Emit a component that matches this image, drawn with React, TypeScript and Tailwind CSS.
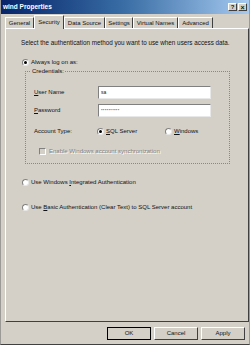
import React from 'react';

const tabs = [
  { label: 'General', w: 'w-[29px]' },
  { label: 'Security', w: 'w-[30px]', active: true },
  { label: 'Data Source', w: 'w-[41px]' },
  { label: 'Settings', w: 'w-[28px]' },
  { label: 'Virtual Names', w: 'w-[45px]' },
  { label: 'Advanced', w: 'w-[35px]' },
];

function Radio({ checked }: { checked?: boolean }) {
  return (
    <span className="flex h-[7px] w-[7px] shrink-0 items-center justify-center rounded-full border border-[#808080] border-b-[#e8e8e8] border-r-[#e8e8e8] bg-white">
      {checked && <span className="h-[3px] w-[3px] rounded-full bg-black" />}
    </span>
  );
}

function Button({ label, primary }: { label: string; primary?: boolean }) {
  return (
    <div
      className={
        'flex h-[13px] w-[44px] items-center justify-center border text-[6px] ' +
        (primary
          ? 'border-black'
          : 'border-white border-b-[#404040] border-r-[#404040]')
      }
    >
      {label}
    </div>
  );
}

export default function App() {
  return (
    <div className="flex h-[345px] w-[250px] flex-col border-x border-b border-x-[#9c9a96] border-b-[#404040] bg-[#d4d0c8] font-['Liberation_Sans',Arial,sans-serif] text-[#111]">
      {/* Title bar */}
      <div className="flex h-[14px] shrink-0 items-center justify-between bg-gradient-to-r from-[#0a246a] via-[#3a6ea5] to-[#a6caf0] pl-[2px] pr-[2px]">
        <span className="text-[6.5px] font-bold leading-none text-white">wind Properties</span>
        <div className="flex gap-[1px]">
          <span className="flex h-[8px] w-[9px] items-center justify-center border border-white border-b-[#404040] border-r-[#404040] bg-[#d4d0c8] text-[6px] font-bold leading-none">?</span>
          <span className="flex h-[8px] w-[9px] items-center justify-center border border-white border-b-[#404040] border-r-[#404040] bg-[#d4d0c8] text-[7px] font-bold leading-none">×</span>
        </div>
      </div>

      {/* Tabs */}
      <div className="mt-[1px] flex h-[13px] shrink-0 items-end pl-[4px]">
        {tabs.map((t) =>
          t.active ? (
            <div
              key={t.label}
              className={`relative z-10 -mb-px flex h-[14px] items-center justify-center border-l border-r border-t border-l-white border-r-[#404040] border-t-white bg-[#d4d0c8] text-[6px] ${t.w}`}
            >
              {t.label}
            </div>
          ) : (
            <div
              key={t.label}
              className={`flex h-[11px] items-center justify-center border-l border-r border-t border-l-white border-r-[#404040] border-t-white text-[6px] ${t.w}`}
            >
              {t.label}
            </div>
          )
        )}
      </div>

      {/* Panel */}
      <div className="ml-[4px] flex h-[294px] w-[244px] shrink-0 flex-col border border-white border-b-[#404040] border-r-[#404040] pl-[15px]">
        <p className="mt-[10px] text-[6.3px] leading-[8px]">
          Select the authentication method you want to use when users access data.
        </p>

        <div className="mt-[11px] flex h-[8px] items-center gap-[2px] pl-[1px] text-[6px]">
          <Radio checked />
          <span>Always log on as:</span>
        </div>

        <fieldset className="mt-[1px] ml-[4px] h-[97px] w-[205px] border border-dotted border-[#8a8884] pl-[8px]">
          <legend className="-ml-[3px] px-[1px] text-[6px] leading-[8px]">Credentials:</legend>

          <div className="mt-[11px] flex h-[13px] items-center text-[6px]">
            <span className="w-[64px]"><span className="underline">U</span>ser Name</span>
            <div className="flex h-[13px] w-[113px] items-center border border-[#808080] border-b-[#e8e8e8] border-r-[#e8e8e8] bg-white pl-[2px] text-[5px]">
              sa
            </div>
          </div>

          <div className="mt-[5px] flex h-[13px] items-center text-[6px]">
            <span className="w-[64px]"><span className="underline">P</span>assword</span>
            <div className="flex h-[13px] w-[113px] items-center border border-[#808080] border-b-[#e8e8e8] border-r-[#e8e8e8] bg-white pl-[2px] text-[4px] tracking-[0.3px]">
              **********
            </div>
          </div>

          <div className="mt-[10px] flex h-[8px] items-center text-[6px]">
            <span className="w-[63px]">Account Type:</span>
            <Radio checked />
            <span className="ml-[2px] w-[59px]"><span className="underline">S</span>QL Server</span>
            <Radio />
            <span className="ml-[2px]"><span className="underline">W</span>indows</span>
          </div>

          <div className="ml-[5px] mt-[12px] flex h-[8px] items-center gap-[3px] text-[6px] text-[#808080]">
            <span className="h-[7px] w-[7px] border border-[#808080] border-b-white border-r-white" />
            <span className="[text-shadow:1px_1px_0_#fff]">Enable Windows account synchronization</span>
          </div>
        </fieldset>

        <div className="mt-[14px] flex h-[8px] items-center gap-[2px] pl-[1px] text-[6px]">
          <Radio />
          <span>Use Windows <span className="underline">I</span>ntegrated Authentication</span>
        </div>

        <div className="mt-[17px] flex h-[8px] items-center gap-[2px] pl-[1px] text-[6px]">
          <Radio />
          <span>Use <span className="underline">B</span>asic Authentication (Clear Text) to SQL Server account</span>
        </div>
      </div>

      {/* Buttons */}
      <div className="mt-[5px] flex justify-end gap-[3px] pr-[4px]">
        <Button label="OK" primary />
        <Button label="Cancel" />
        <Button label="Apply" />
      </div>
    </div>
  );
}
